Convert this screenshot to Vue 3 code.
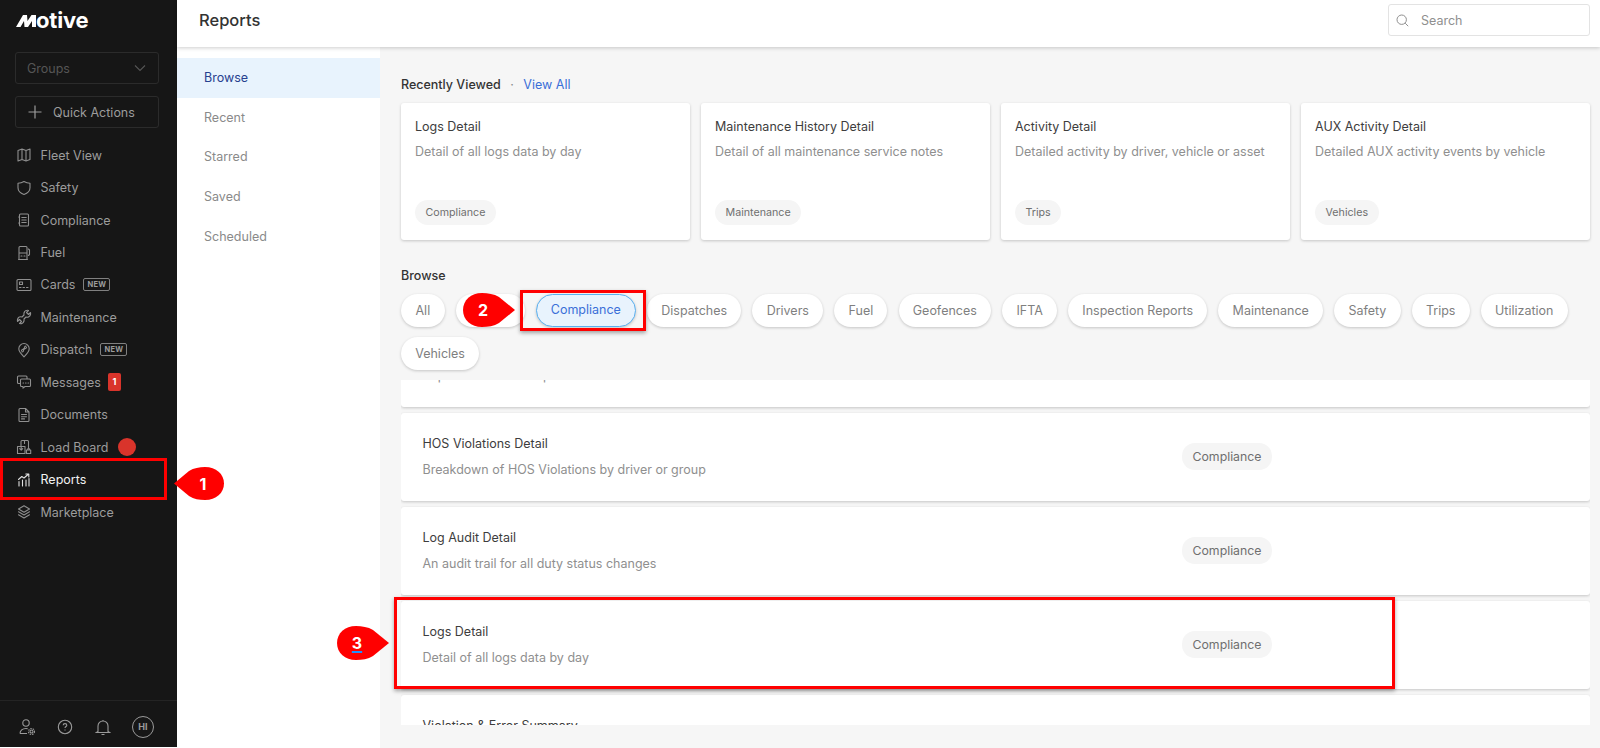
<script setup>
const navItems = [
  { label: "Fleet View", icon: "map" },
  { label: "Safety", icon: "shield" },
  { label: "Compliance", icon: "compliance" },
  { label: "Fuel", icon: "fuel" },
  { label: "Cards", icon: "card", tag: "NEW" },
  { label: "Maintenance", icon: "wrench" },
  { label: "Dispatch", icon: "pin", tag: "NEW" },
  { label: "Messages", icon: "chat", count: 1 },
  { label: "Documents", icon: "doc" },
  { label: "Load Board", icon: "load", dot: true },
  { label: "Reports", icon: "chart", active: true },
  { label: "Marketplace", icon: "layers" },
];

const subNav = ["Browse", "Recent", "Starred", "Saved", "Scheduled"];

const recent = [
  { title: "Logs Detail", desc: "Detail of all logs data by day", tag: "Compliance" },
  { title: "Maintenance History Detail", desc: "Detail of all maintenance service notes", tag: "Maintenance" },
  { title: "Activity Detail", desc: "Detailed activity by driver, vehicle or asset", tag: "Trips" },
  { title: "AUX Activity Detail", desc: "Detailed AUX activity events by vehicle", tag: "Vehicles" },
];

const chips = [
  "All", "Assets", "Compliance", "Dispatches", "Drivers", "Fuel", "Geofences", "IFTA",
  "Inspection Reports", "Maintenance", "Safety", "Trips", "Utilization", "Vehicles",
];

const rows = [
  { title: "HOS Exemption Detail", desc: "Report of HOS exemptions" },
  { title: "HOS Violations Detail", desc: "Breakdown of HOS Violations by driver or group" },
  { title: "Log Audit Detail", desc: "An audit trail for all duty status changes" },
  { title: "Logs Detail", desc: "Detail of all logs data by day" },
  { title: "Violation & Error Summary", desc: "Summary of violations and errors" },
];

const icons = {
  map: "M2 3.500 6 2l4 1.500L14 2v10.500L10 14l-4-1.500L2 14zM6 2v10.500M10 3.500V14",
  shield: "M8 1.500c2 1.200 3.800 1.700 6 1.800v4.500c0 3.200-2.400 5.500-6 6.700-3.600-1.200-6-3.500-6-6.700V3.300c2.200-.1 4-.6 6-1.800z",
  compliance: "M4.500 2h7a1 1 0 0 1 1 1v10a1 1 0 0 1-1 1h-7a1 1 0 0 1-1-1V3a1 1 0 0 1 1-1zM5.800 5.500h4.400M5.800 8h4.400M5.800 10.500h4.400M3.500 5h-.8M3.500 11h-.8",
  fuel: "M3 14.500V2.500a1 1 0 0 1 1-1h6a1 1 0 0 1 1 1v12M2.500 14.500h9M3 8h8M5 11h1M8 11h1M12.500 4l1 1v4.500l-1 1",
  card: "M2 2.500h12a1 1 0 0 1 1 1v9a1 1 0 0 1-1 1H2a1 1 0 0 1-1-1v-9a1 1 0 0 1 1-1zM3.500 5h3v2.500h-3zM3.500 10.500h1.500M7 10.500h1.500M10.500 10.500H12",
  wrench: "M14.500 3.500 12.500 5.500 10.500 3.500 12.500 1.500C10.500 1 8.500 2 8 4 7.800 5 8 6 8 6L6 8C4 7.500 2 8.500 1.500 10.500 1.300 11.500 1.500 12.500 1.500 12.500L3.500 10.500 5.500 12.500 3.500 14.500C5.500 15 7.500 14 8 12 8.200 11 8 10 8 10L10 8C12 8.500 14 7.500 14.500 5.500 14.700 4.500 14.500 3.500 14.500 3.500Z",
  pin: "M8 14.800C5.200 12 2.800 9.800 2.800 6.700a5.200 5.200 0 0 1 10.400 0c0 3.100-2.400 5.300-5.200 8.100zM5.500 8.800c0-2.200 3-1 3-3.200 0-.8.700-1.500 1.500-1.500M10.500 5.200c0 2.200-3 1-3 3.200 0 .8-.7 1.500-1.500 1.500",
  chat: "M11 4.500V3a1 1 0 0 0-1-1H2.500a1 1 0 0 0-1 1v5.500a1 1 0 0 0 1 1H4M5.500 5h8a1 1 0 0 1 1 1v5.500a1 1 0 0 1-1 1H9l-2 1.700v-1.700H5.500a1 1 0 0 1-1-1V6a1 1 0 0 1 1-1zM7 9h.6M9.500 9h.6M12 9h.6",
  doc: "M3 2.500a1 1 0 0 1 1-1h5.500l3.500 3.500v8.500a1 1 0 0 1-1 1H4a1 1 0 0 1-1-1zM9.500 1.500V5H13M5.500 7.500h5M5.500 9.700h5M5.500 11.900h3",
  load: "M5 7V2.500a1 1 0 0 1 1-1h5.500a1 1 0 0 1 1 1V9M8.500 1.500v3M1.500 7.500h7.500v7H1.500zM5.200 7.500v3.500M3.700 9.700l1.500 1.500 1.500-1.500M10.500 11h4.200v3.500h-4.200zM11.700 11v-1.200h1.800V11",
  chart: "M3 14V9.500M6.500 14V8M10 14V8M13 14V6.500M2.500 7.500 5.800 4.500 8 6 12 2.500M9.800 2H12.800V5",
  layers: "M8 1.800 13.500 5 8 8.200 2.500 5zM2.500 7.800 8 11l5.500-3.200M2.500 10.800 8 14l5.500-3.200",
};
</script>

<template>
  <div class="app">
    <aside class="sidebar">
      <div class="logo">
        <svg width="20" height="12" viewBox="0 0 20 12" fill="#fff"><path d="M0 12 7 0h4l.5 6 4-6H20v12h-4V6l-4 6H8.500L8 6l-3.500 6z" /></svg>
        <span>otive</span>
      </div>

      <div class="side-btn groups">
        <span>Groups</span>
        <svg width="14" height="14" viewBox="0 0 14 14" fill="none" stroke="currentColor" stroke-width="1.100"><path d="M2 4.500 7 9.500l5-5" /></svg>
      </div>
      <div class="side-btn quick">
        <svg width="16" height="16" viewBox="0 0 16 16" fill="none" stroke="currentColor" stroke-width="1.200"><path d="M8 1.500v13M1.500 8h13" /></svg>
        <span>Quick Actions</span>
      </div>

      <nav class="side-nav">
        <div v-for="item in navItems" :key="item.label" class="nav-item" :class="{ active: item.active }">
          <svg class="nav-icon" width="16" height="16" viewBox="0 0 16 16" fill="none" stroke="currentColor" stroke-width="1.100" stroke-linejoin="round" stroke-linecap="round">
            <path :d="icons[item.icon]" />
          </svg>
          <span>{{ item.label }}</span>
          <span v-if="item.tag" class="new-tag">{{ item.tag }}</span>
          <span v-if="item.count" class="count">{{ item.count }}</span>
          <span v-if="item.dot" class="red-dot"></span>
        </div>
      </nav>

      <div class="side-foot">
        <svg width="18" height="18" viewBox="0 0 18 18" fill="none" stroke="currentColor" stroke-width="1.100">
          <circle cx="8" cy="5" r="3.200" />
          <path d="M2 15.500c0-3 2.500-5 6-5 .6 0 1.200.1 1.700.2M2 15.500h7" />
          <circle cx="13.500" cy="13.500" r="1.500" />
          <circle cx="13.500" cy="13.500" r="3" stroke-dasharray="1.500 1" />
        </svg>
        <svg width="16" height="16" viewBox="0 0 16 16" fill="none" stroke="currentColor" stroke-width="1.100">
          <circle cx="8" cy="8" r="6.700" />
          <path d="M6.200 6.300c0-1 .8-1.700 1.800-1.700s1.800.7 1.800 1.600c0 1.300-1.800 1.400-1.800 2.800M8 10.600v1" />
        </svg>
        <svg width="16" height="17" viewBox="0 0 16 17" fill="none" stroke="currentColor" stroke-width="1.100">
          <path d="M3 12.500V7a5 5 0 0 1 10 0v5.500l1.500 1h-13zM6.500 15.500h3M8 2V1" />
        </svg>
        <span class="avatar">HI</span>
      </div>
    </aside>

    <div class="content">
      <header class="topbar">
        <h1>Reports</h1>
        <div class="search">
          <svg width="13" height="13" viewBox="0 0 13 13" fill="none" stroke="currentColor" stroke-width="1">
            <circle cx="5.700" cy="5.700" r="4.700" />
            <path d="m9.200 9.200 3 3" />
          </svg>
          <span>Search</span>
        </div>
      </header>

      <div class="body">
        <div class="subnav">
          <div v-for="(s, i) in subNav" :key="s" class="subnav-item" :class="{ current: i === 0 }">{{ s }}</div>
        </div>

        <main class="main">
          <div class="recent-head">
            <strong>Recently Viewed</strong>
            <span class="sep">·</span>
            <a>View All</a>
          </div>
          <div class="cards">
            <div v-for="c in recent" :key="c.title" class="card">
              <div class="title">{{ c.title }}</div>
              <div class="desc">{{ c.desc }}</div>
              <span class="tag small">{{ c.tag }}</span>
            </div>
          </div>

          <div class="browse-head">Browse</div>
          <div class="chips">
            <span v-for="c in chips" :key="c" class="chip" :class="{ selected: c === 'Compliance' }">{{ c }}</span>
          </div>

          <div class="list">
            <div class="list-inner">
              <div v-for="r in rows" :key="r.title" class="row">
                <div class="row-text">
                  <div class="title">{{ r.title }}</div>
                  <div class="desc">{{ r.desc }}</div>
                </div>
                <span class="tag">Compliance</span>
              </div>
            </div>
          </div>
        </main>
      </div>
    </div>

    <!-- tutorial annotations on top of the screenshot -->
    <div class="mark mark-1"></div>
    <div class="mark mark-2"></div>
    <div class="mark mark-3"></div>

    <div class="callout callout-1">
      <svg width="50" height="33" viewBox="0 0 50 33"><path d="M0 16.500 15 4C20 1 25 0 31 0c11 0 19 7 19 16.500S42 33 31 33c-6 0-11-1-16-4z" fill="#f00" /></svg>
      <span>1</span>
    </div>
    <div class="callout callout-2">
      <svg width="52" height="34" viewBox="0 0 52 34"><path d="M52 17 36 4C31 1 25 0 19 0 8 0 0 7 0 17s8 17 19 17c6 0 12-1 17-4z" fill="#f00" /></svg>
      <span>2</span>
    </div>
    <div class="callout callout-3">
      <svg width="52" height="34" viewBox="0 0 52 34"><path d="M52 17 36 4C31 1 25 0 19 0 8 0 0 7 0 17s8 17 19 17c6 0 12-1 17-4z" fill="#f00" /></svg>
      <span class="under">3</span>
    </div>
  </div>
</template>

<style>
html,
body {
  margin: 0;
  background: #fff;
}
</style>

<style scoped>
.app {
  position: relative;
  display: flex;
  height: 748px;
  overflow: hidden;
  font-family: Inter, "Liberation Sans", sans-serif;
  font-size: 12.500px;
}

.sidebar {
  width: 177px;
  flex: none;
  height: 747px;
  background: #161616;
  color: #9c9c9c;
  display: flex;
  flex-direction: column;
}

.logo {
  height: 40px;
  margin: 0 0 12px 16px;
  color: #fff;
  font-size: 22px;
  font-weight: 700;
  line-height: 38px;
  letter-spacing: -0.2px;
  display: flex;
  align-items: center;
}

.logo svg {
  margin: 1px 0 0 0;
}

.side-btn {
  box-sizing: border-box;
  width: 144px;
  height: 32px;
  margin-left: 15px;
  border: 1px solid #2b2b2b;
  border-radius: 3px;
  display: flex;
  align-items: center;
}

.groups {
  justify-content: space-between;
  padding: 0 11px;
  color: #555;
}

.quick {
  margin-top: 12px;
  padding-left: 11px;
  gap: 10px;
  color: #9c9c9c;
}

.side-nav {
  margin-top: 11px;
}

.nav-item {
  position: relative;
  height: 32.450px;
  padding-left: 16px;
  display: flex;
  align-items: center;
}

.nav-item.active {
  color: #f2f2f2;
}

.nav-icon {
  flex: none;
  margin-right: 8.500px;
  color: #8f8f8f;
}

.active .nav-icon {
  color: #e0e0e0;
}

.new-tag {
  margin-left: 8px;
  padding: 0 3px;
  border: 1px solid #808080;
  border-radius: 2px;
  font-size: 7.500px;
  font-weight: 700;
  line-height: 11px;
  letter-spacing: 0.3px;
}

.count {
  margin-left: 7px;
  width: 13px;
  height: 18px;
  border-radius: 2px;
  background: #d9342b;
  color: #fff;
  font-size: 9px;
  font-weight: 700;
  line-height: 18px;
  text-align: center;
}

.red-dot {
  margin-left: 10px;
  width: 18px;
  height: 18px;
  border-radius: 50%;
  background: #d9342b;
}

.side-foot {
  box-sizing: border-box;
  margin-top: auto;
  height: 47px;
  border-top: 1px solid #242424;
  padding: 6px 23px 0 18px;
  display: flex;
  align-items: center;
  justify-content: space-between;
  color: #9a9a9a;
}

.avatar {
  box-sizing: border-box;
  width: 22px;
  height: 22px;
  border: 1px solid #9a9a9a;
  border-radius: 50%;
  font-size: 9px;
  font-weight: 700;
  line-height: 20px;
  text-align: center;
}

.content {
  flex: 1;
  min-width: 0;
  display: flex;
  flex-direction: column;
}

.topbar {
  position: relative;
  z-index: 1;
  height: 47px;
  flex: none;
  background: #fff;
  box-shadow: 0 1px 4px rgba(0, 0, 0, 0.2);
  padding: 0 10px 0 22px;
  display: flex;
  align-items: center;
  justify-content: space-between;
}

.topbar h1 {
  margin: 0 0 7px;
  font-size: 16.500px;
  font-weight: 500;
  color: #333;
}

.search {
  box-sizing: border-box;
  width: 202px;
  height: 32px;
  margin-bottom: 7px;
  border: 1px solid #e3e3e3;
  border-radius: 3px;
  padding-left: 7px;
  display: flex;
  align-items: center;
  gap: 12px;
  color: #8f8f8f;
}

.search svg {
  flex: none;
}

.body {
  flex: 1;
  min-height: 0;
  display: flex;
}

.subnav {
  width: 203px;
  flex: none;
  padding-top: 11px;
  background: #fff;
}

.subnav-item {
  height: 39.700px;
  padding-left: 27px;
  line-height: 39.700px;
  color: #8a8a8a;
}

.subnav-item.current {
  background: #e8f3fd;
  color: #27408f;
}

.main {
  flex: 1;
  min-width: 0;
  background: #f6f6f6;
  padding: 0 10px 0 21px;
}

.recent-head {
  margin-top: 29px;
  line-height: 18px;
  display: flex;
  gap: 9.500px;
  color: #333;
}

.recent-head strong {
  font-weight: 500;
}

.recent-head .sep {
  color: #8a8a8a;
}

.recent-head a {
  color: #3a6fd8;
}

.cards {
  margin-top: 9px;
  display: grid;
  grid-template-columns: repeat(4, 1fr);
  gap: 11px;
}

.card {
  box-sizing: border-box;
  height: 137px;
  padding: 16px 14px 0;
  background: #fff;
  border-radius: 3px;
  box-shadow: 0 1px 3px rgba(0, 0, 0, 0.2);
}

.title {
  color: #3d3d3d;
  line-height: 16px;
}

.desc {
  margin-top: 9px;
  color: #8f8f8f;
  line-height: 16px;
}

.tag {
  display: inline-block;
  padding: 0 11px;
  border-radius: 13px;
  background: #f5f5f5;
  color: #6f6f6f;
  font-size: 12.300px;
  line-height: 27px;
}

.tag.small {
  margin-top: 40px;
  padding: 0 10.500px;
  font-size: 10.700px;
  line-height: 25px;
}

.browse-head {
  margin-top: 28px;
  line-height: 16px;
  font-weight: 500;
  color: #333;
}

.chips {
  margin-top: 10px;
  display: flex;
  flex-wrap: wrap;
  gap: 10px 11.200px;
}

.chip {
  box-sizing: border-box;
  height: 33px;
  padding: 0 14.200px;
  border-radius: 17px;
  background: #fff;
  box-shadow: 0 1px 3px rgba(0, 0, 0, 0.2);
  color: #7f7f7f;
  line-height: 33px;
}

.chip:nth-child(-n + 2) {
  padding: 0 14.500px;
}

.chip.selected {
  border: 1.500px solid #5ab0f0;
  padding: 0 14px;
  background: #e8f3fd;
  color: #3a6fd8;
  line-height: 30px;
}

.list {
  height: 345px;
  margin-top: 10px;
  overflow: hidden;
}

.list-inner {
  margin-top: -61px;
  display: flex;
  flex-direction: column;
  gap: 6px;
}

.row {
  box-sizing: border-box;
  height: 88px;
  flex: none;
  padding: 23px 21.500px 0;
  background: #fff;
  border-radius: 3px;
  box-shadow: 0 1px 3px rgba(0, 0, 0, 0.2);
  display: flex;
  justify-content: space-between;
}

.row-text {
  width: 759px;
  flex: none;
}

.row .title {
  line-height: 16px;
}

.row .desc {
  margin-top: 10px;
}

.row .tag {
  align-self: flex-start;
  margin: 7px auto 0 0;
}

.mark {
  position: absolute;
  box-sizing: border-box;
  border: 3px solid #f00;
  box-shadow: 0 2px 4px rgba(0, 0, 0, 0.35);
}

.mark-1 {
  left: 0;
  top: 458px;
  width: 167px;
  height: 42px;
  box-shadow: none;
}

.mark-2 {
  left: 520px;
  top: 290px;
  width: 126px;
  height: 41px;
}

.mark-3 {
  left: 394px;
  top: 597px;
  width: 1001px;
  height: 92px;
}

.callout {
  position: absolute;
  display: flex;
  color: #fff;
  font-size: 16px;
  font-weight: 700;
}

.callout span {
  position: absolute;
  left: 0;
  top: 0;
  line-height: 34px;
  text-align: center;
}

.callout-1 {
  left: 174px;
  top: 467px;
}

.callout-1 span {
  left: 24px;
  width: 10px;
}

.callout-2 {
  left: 463px;
  top: 293px;
}

.callout-2 span {
  width: 40px;
}

.callout-3 {
  left: 337px;
  top: 626px;
}

.callout-3 span {
  width: 40px;
}

.callout .under {
  text-decoration: underline 2px #1e90ff;
  text-underline-offset: 2px;
}
</style>
